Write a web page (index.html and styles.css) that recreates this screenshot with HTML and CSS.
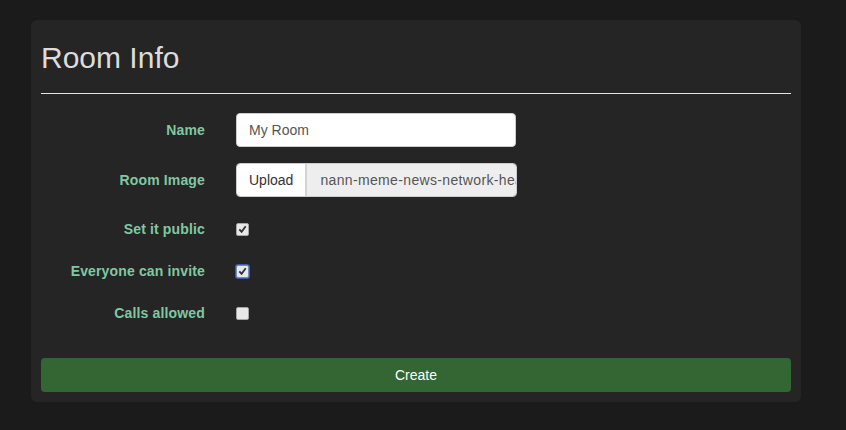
FILE: index.html
```html
<!DOCTYPE html>
<html>
<head>
<meta charset="utf-8">
<link rel="stylesheet" href="styles.css">
</head>
<body>
<div class="card">
  <h1 class="title">Room Info</h1>
  <hr class="rule">
  <form class="form">
    <div class="row row-input">
      <label class="label">Name</label>
      <div class="control"><input class="text-input" type="text" value="My Room"></div>
    </div>
    <div class="row row-input row-image">
      <label class="label">Room Image</label>
      <div class="control">
        <div class="file-group">
          <span class="upload-btn">Upload</span>
          <span class="file-name">nann-meme-news-network-header.png</span>
        </div>
      </div>
    </div>
    <div class="row row-check">
      <label class="label">Set it public</label>
      <div class="control"><span class="check checked"><svg viewBox="0 0 12 12" width="12" height="12"><path d="M2.5 6.5 L5 9 L9.5 3" fill="none" stroke="#333" stroke-width="2"/></svg></span></div>
    </div>
    <div class="row row-check">
      <label class="label">Everyone can invite</label>
      <div class="control"><span class="check checked focus"><svg viewBox="0 0 12 12" width="12" height="12"><path d="M2.5 6.5 L5 9 L9.5 3" fill="none" stroke="#333" stroke-width="2"/></svg></span></div>
    </div>
    <div class="row row-check">
      <label class="label">Calls allowed</label>
      <div class="control"><span class="check"></span></div>
    </div>
    <button class="create" type="button">Create</button>
  </form>
</div>
</body>
</html>
```
FILE: styles.css
```css
* { box-sizing: border-box; }
html, body { margin: 0; padding: 0; }
body {
  background: #1b1b1b;
  font-family: "Liberation Sans", Arial, sans-serif;
  font-size: 14px;
  color: #ddd;
  padding: 20px 0 0 31px;
}
.card {
  width: 770px;
  background: #252525;
  border-radius: 6px;
  padding: 21px 10px 10px 10px;
}
.title {
  margin: 0;
  font-weight: normal;
  font-size: 30px;
  line-height: 33px;
  color: #dcdcdc;
}
.rule {
  margin: 19px 0 0 0;
  border: 0;
  border-top: 1px solid #e4e4e4;
  height: 0;
}
.form {
  display: flex;
  flex-direction: column;
  padding-top: 19px;
}
.row {
  display: flex;
  align-items: center;
}
.row-input { height: 34px; margin-bottom: 16px; }
.row-image { margin-bottom: 11px; }
.row-check { height: 42px; }
.label {
  width: 164px;
  text-align: right;
  font-weight: bold;
  color: #80c8a2;
  letter-spacing: 0.15px;
  margin-right: 31px;
}
.text-input {
  width: 280px;
  height: 34px;
  border: 1px solid #ccc;
  border-radius: 4px;
  background: #fff;
  color: #555;
  font-family: inherit;
  font-size: 14px;
  padding: 0 12px;
  outline: none;
}
.file-group {
  display: flex;
  width: 281px;
  height: 34px;
  border: 1px solid #ccc;
  border-radius: 4px;
  overflow: hidden;
}
.upload-btn {
  display: flex;
  align-items: center;
  padding: 0 12px;
  background: #fff;
  color: #333;
  border-right: 2px solid #d4d4d4;
  white-space: nowrap;
}
.file-name {
  flex: 1;
  display: flex;
  align-items: center;
  padding-left: 13px;
  background: #eee;
  color: #555;
  letter-spacing: 0.35px;
  white-space: nowrap;
  overflow: hidden;
}
.check {
  display: flex;
  align-items: center;
  justify-content: center;
  width: 13px;
  height: 13px;
  background: #e8e8e8;
  border: 1px solid #a6a6a6;
  border-radius: 2px;
}
.check svg { display: block; }
.check.focus {
  box-shadow: 0 0 0 1px #3c5d9e;
  border-color: #6f8cc4;
}
.create {
  margin-top: 24px;
  height: 34px;
  width: 100%;
  border: 0;
  border-radius: 4px;
  background: #336633;
  color: #fff;
  font-family: inherit;
  font-size: 14px;
}
```
